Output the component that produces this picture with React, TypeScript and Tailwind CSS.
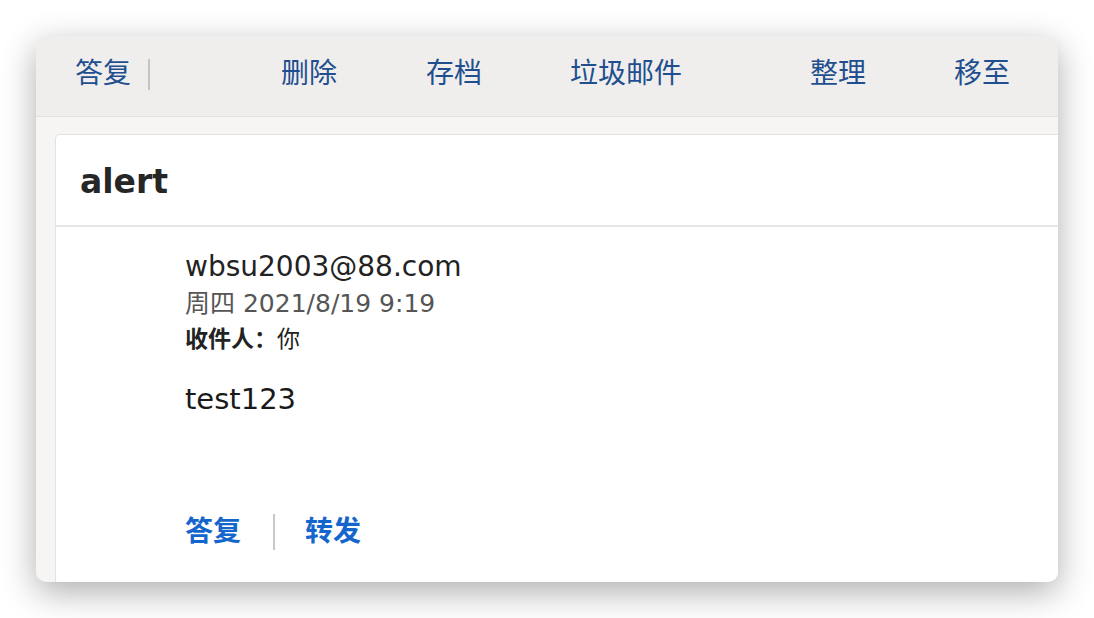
import React from "react";

const font = { fontFamily: '"DejaVu Sans", "Noto Sans CJK SC", sans-serif' } as React.CSSProperties;

export default function App() {
  const tb = "text-[28px] leading-[40px] text-[#1f4f8f]";
  return (
    <div className="w-[1094px] h-[618px] bg-white pt-[36px] pl-[36px]" style={font}>
      <div className="w-[1022px] h-[546px] rounded-[10px] overflow-hidden bg-[#f6f5f3] shadow-[0_10px_34px_rgba(0,0,0,0.32)] flex flex-col">
        <div className="h-[81px] shrink-0 bg-[#efeeed] border-b border-[#e4e2df] flex items-center pl-[39px] pb-[4px]">
          <span className={tb}>答复</span>
          <span className="ml-[17px] w-[2px] h-[31px] bg-[#c4c4c4]" />
          <span className={`${tb} ml-[131px]`}>删除</span>
          <span className={`${tb} ml-[89px]`}>存档</span>
          <span className={`${tb} ml-[88px]`}>垃圾邮件</span>
          <span className={`${tb} ml-[128px]`}>整理</span>
          <span className={`${tb} ml-[88px]`}>移至</span>
        </div>
        <div className="flex-1 pt-[17px] pl-[19px] mr-[-20px] flex">
          <div className="flex-1 bg-white border-l border-t border-[#e2e2e2] rounded-tl-[5px] flex flex-col">
            <div className="h-[92px] shrink-0 border-b-2 border-[#e6e6e6] flex items-center pl-[24px] pt-[4px]">
              <span className="text-[33px] font-bold text-[#262626] leading-[40px]">alert</span>
            </div>
            <div className="pl-[129px] pt-[22px] flex flex-col">
              <div className="text-[28px] leading-[36px] text-[#222]">wbsu2003@88.com</div>
              <div className="text-[25px] leading-[38px] text-[#555]">周四 2021/8/19 9:19</div>
              <div className="text-[23px] leading-[32px] text-[#222]">
                <span className="font-bold">收件人：</span>你
              </div>
              <div className="mt-[26px] text-[29px] leading-[36px] text-[#1a1a1a]">test123</div>
              <div className="mt-[95px] flex items-center h-[40px]">
                <span className="text-[28px] leading-[40px] font-bold text-[#1566cc]">答复</span>
                <span className="ml-[32px] mr-[30px] w-[2px] h-[36px] bg-[#c8c8c8]" />
                <span className="text-[28px] leading-[40px] font-bold text-[#1566cc]">转发</span>
              </div>
            </div>
          </div>
        </div>
      </div>
    </div>
  );
}
